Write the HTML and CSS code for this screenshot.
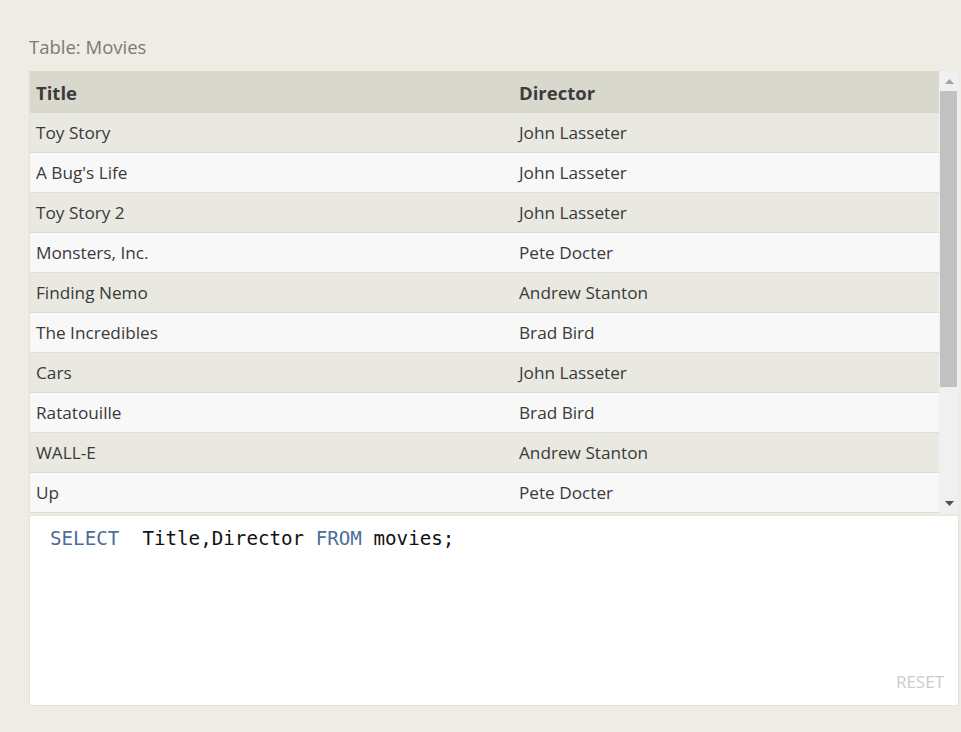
FILE: index.html
```html
<!DOCTYPE html>
<html>
<head>
<meta charset="utf-8">
<link rel="stylesheet" href="styles.css">
</head>
<body>
<div class="panel">
  <div class="caption">Table: Movies</div>
  <div class="table-box">
    <div class="table-scroll">
      <table class="results">
        <thead>
          <tr><th class="col-title">Title</th><th>Director</th></tr>
        </thead>
        <tbody>
          <tr><td>Toy Story</td><td>John Lasseter</td></tr>
          <tr><td>A Bug's Life</td><td>John Lasseter</td></tr>
          <tr><td>Toy Story 2</td><td>John Lasseter</td></tr>
          <tr><td>Monsters, Inc.</td><td>Pete Docter</td></tr>
          <tr><td>Finding Nemo</td><td>Andrew Stanton</td></tr>
          <tr><td>The Incredibles</td><td>Brad Bird</td></tr>
          <tr><td>Cars</td><td>John Lasseter</td></tr>
          <tr><td>Ratatouille</td><td>Brad Bird</td></tr>
          <tr><td>WALL-E</td><td>Andrew Stanton</td></tr>
          <tr><td>Up</td><td>Pete Docter</td></tr>
        </tbody>
      </table>
    </div>
    <div class="vscroll">
      <div class="sb-btn">
        <svg width="9" height="5" viewBox="0 0 9 5"><polygon points="0,5 4.5,0 9,5" fill="#a3a3a3"/></svg>
      </div>
      <div class="sb-track"><div class="sb-thumb"></div></div>
      <div class="sb-btn">
        <svg width="9" height="5" viewBox="0 0 9 5"><polygon points="0,0 9,0 4.5,5" fill="#505050"/></svg>
      </div>
    </div>
  </div>
  <div class="editor">
    <div class="code"><span class="kw">SELECT</span>  Title,Director <span class="kw">FROM</span> movies;</div>
    <div class="editor-foot"><span class="reset">RESET</span></div>
  </div>
</div>
</body>
</html>
```
FILE: styles.css
```css
html, body {
  margin: 0;
  padding: 0;
  background: #efece5;
}
body {
  font-family: "Open Sans", "Noto Sans", sans-serif;
  color: #333;
  width: 961px;
  height: 732px;
  overflow: hidden;
}
.panel {
  padding: 34px 2px 0 29px;
}
.caption {
  font-size: 18.5px;
  color: #7a7a7a;
  line-height: 26px;
  margin-bottom: 11px;
}
.table-box {
  display: flex;
  height: 442px;
  border-left: 1px solid #e3e1da;
}
.table-scroll {
  flex: 1;
  overflow: hidden;
}
.vscroll {
  width: 20px;
  display: flex;
  flex-direction: column;
  background: #f0f0f0;
}
.sb-btn {
  height: 20px;
  display: flex;
  align-items: center;
  justify-content: center;
}
.sb-track {
  flex: 1;
}
.sb-thumb {
  height: 296px;
  margin: 0 2px 0 1px;
  background: #c1c1c1;
}
.results {
  width: 100%;
  border-collapse: collapse;
  font-size: 17.2px;
}
.results th {
  background: #d9d8cd;
  text-align: left;
  font-weight: 700;
  color: #3b3b3b;
  height: 42px;
  padding: 0 6px;
  font-size: 18.5px;
}
.results .col-title {
  width: 471px;
}
.results td {
  height: 39px;
  padding: 0 6px;
  border-bottom: 1px solid #dedcd5;
  color: #3a3a3a;
}
.results tbody tr:nth-child(odd) td {
  background: #e9e8e1;
}
.results tbody tr:nth-child(even) td {
  background: #f8f8f8;
}
.editor {
  margin-top: 2px;
  height: 189px;
  background: #fff;
  border: 1px solid #e3e1da;
  border-top: 1px solid #e6e4dd;
  display: flex;
  flex-direction: column;
  justify-content: space-between;
}
.code {
  font-family: "DejaVu Sans Mono", "Liberation Mono", monospace;
  font-size: 19.2px;
  color: #111;
  white-space: pre;
  padding: 11px 0 0 20px;
}
.kw {
  color: #4d6d9c;
}
.editor-foot {
  display: flex;
  justify-content: flex-end;
  padding: 0 14px 12px 0;
}
.reset {
  font-size: 17px;
  color: #cccccc;
}
```
